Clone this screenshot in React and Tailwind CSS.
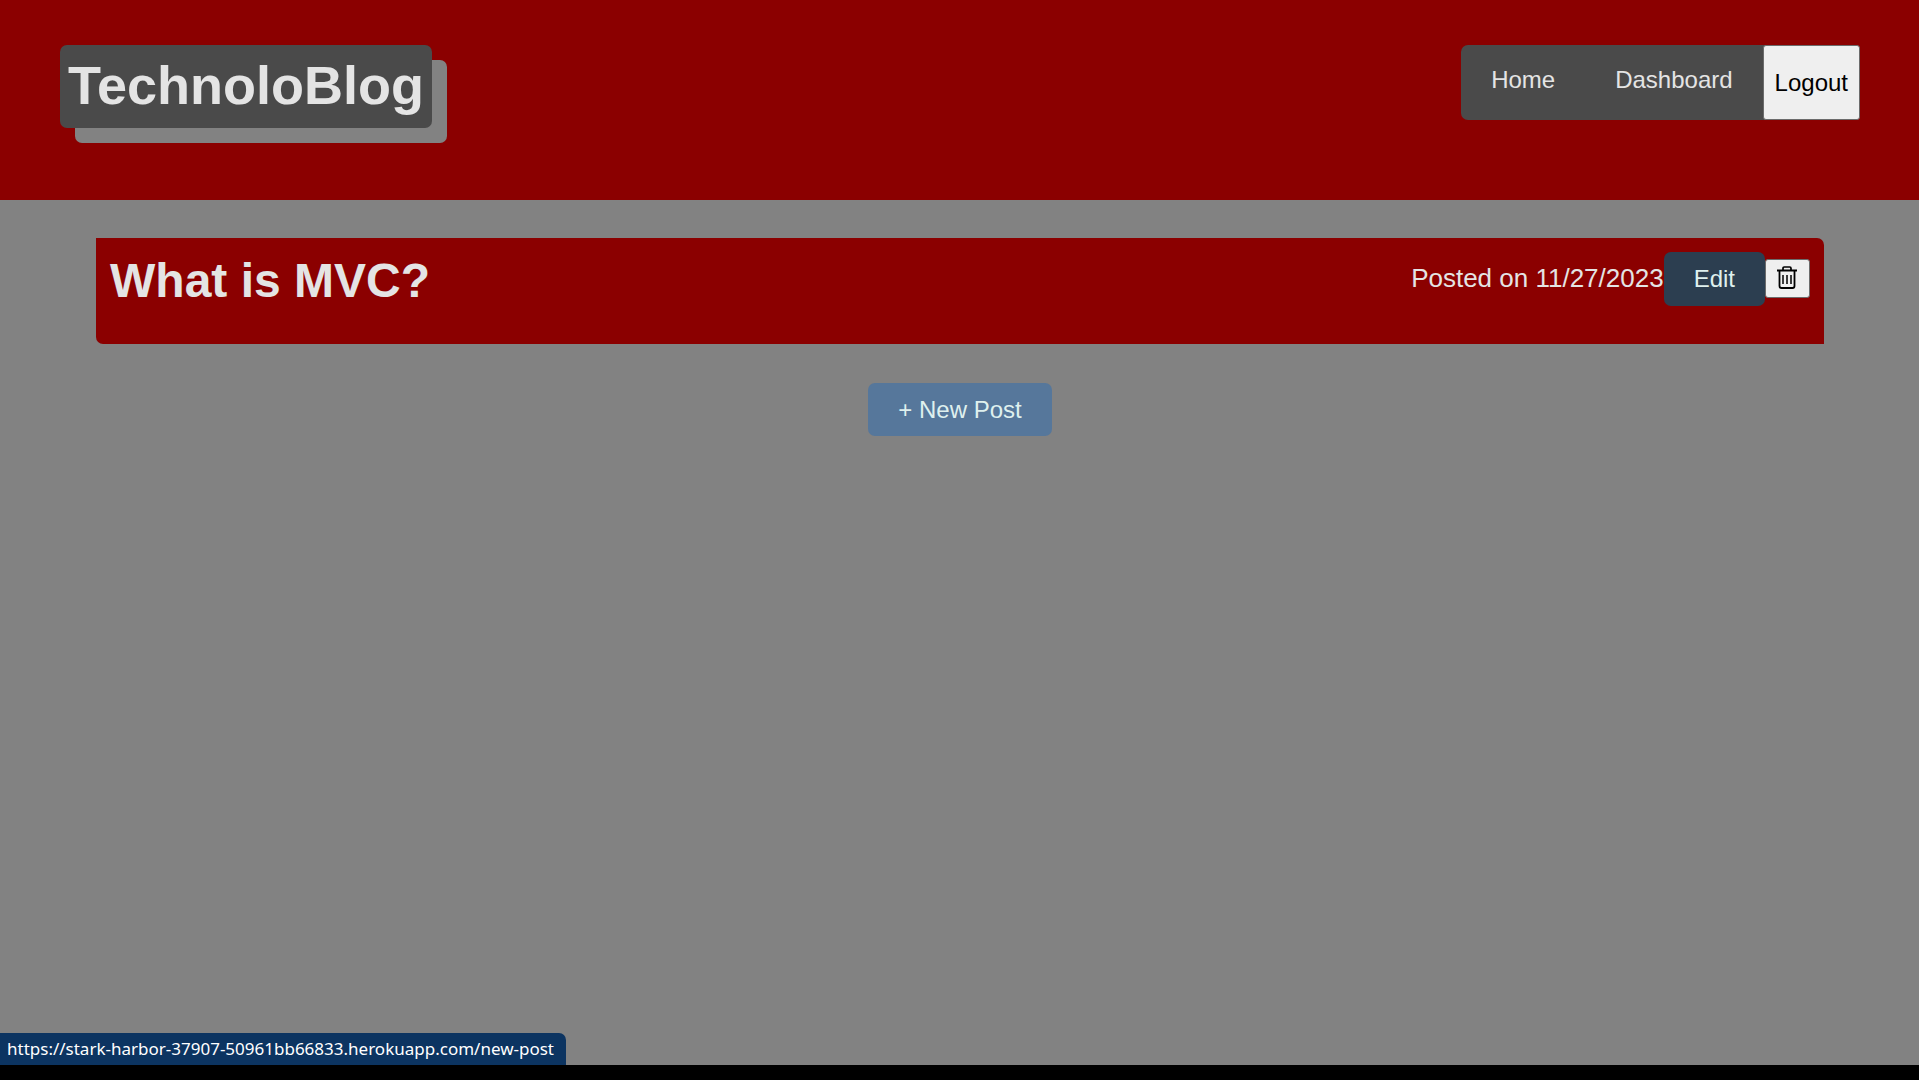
function TrashIcon() {
  return (
    <svg width="20" height="23" viewBox="0 0 20 23" fill="none" stroke="#000" aria-hidden="true">
      <path d="M0 4.5h20" strokeWidth="2" />
      <path d="M6 4V2.2Q6 1 7.2 1h5.6q1.2 0 1.2 1.2V4" strokeWidth="1.7" />
      <path d="M2.5 5v15Q2.5 22 4.5 22h11q2 0 2-2V5" strokeWidth="1.8" />
      <path d="M6 9v9M10 9v9M14 9v9" strokeWidth="1.5" />
    </svg>
  );
}

function Header() {
  return (
    <header className="flex items-start justify-between bg-[#8b0000] pt-[45px] pr-[59px] pb-[72px] pl-[60px]">
      <h1 className="rounded-[7px] bg-[#4a4a4a] px-2 pt-[9px] pb-[11px] text-[54px] leading-[63px] font-bold shadow-[15px_15px_0_#828282]">
        TechnoloBlog
      </h1>
      <nav className="flex h-[75px] rounded-[7px] bg-[#4a4a4a]">
        <a href="#home" className="px-[30px] pt-[21px] leading-7">Home</a>
        <a href="#dashboard" className="px-[30px] pt-[21px] leading-7">Dashboard</a>
        <button type="button" className="rounded-[3px] border border-[#6b6b6b] bg-[#efefef] px-[11px] text-black">
          Logout
        </button>
      </nav>
    </header>
  );
}

function Post() {
  return (
    <article className="flex items-start justify-between rounded-tr-[7px] rounded-bl-[7px] bg-[#8b0000] px-3.5 pt-3.5 pb-[34px]">
      <h2 className="text-5xl leading-[58px] font-bold">What is MVC?</h2>
      <div className="flex items-start">
        <p className="text-[26px] leading-[52px]">Posted on 11/27/2023</p>
        <a href="#edit" className="rounded-[7px] bg-[#2c3e50] px-[30px] py-[13px] leading-7 text-[#dff0ee]">Edit</a>
        <button
          type="button"
          aria-label="Delete post"
          className="mt-[7px] flex h-[39px] w-[45px] items-center justify-center rounded-[3px] border border-[#6b6b6b] bg-[#efefef] pr-px pb-0.5"
        >
          <TrashIcon />
        </button>
      </div>
    </article>
  );
}

export default function App() {
  return (
    <div className="flex min-h-screen flex-col bg-[#828282] font-['Liberation_Sans',Arial,sans-serif] text-2xl text-[#e4e4e4]">
      <Header />
      <main className="flex flex-1 flex-col pt-[38px] pr-[95px] pl-24">
        <Post />
        <a
          href="#new-post"
          className="mt-[39px] self-center rounded-[7px] bg-[#56779b] px-[30px] py-[13px] leading-[27px] text-[#dff0ee]"
        >
          + New Post
        </a>
      </main>
      <footer className="flex border-b-[15px] border-black">
        <p className="rounded-tr-[7px] bg-[#0c3461] pr-3 pl-[7px] font-['Noto_Sans','Open_Sans',sans-serif] text-[17px] leading-8 text-white">
          https://stark-harbor-37907-50961bb66833.herokuapp.com/new-post
        </p>
      </footer>
    </div>
  );
}
